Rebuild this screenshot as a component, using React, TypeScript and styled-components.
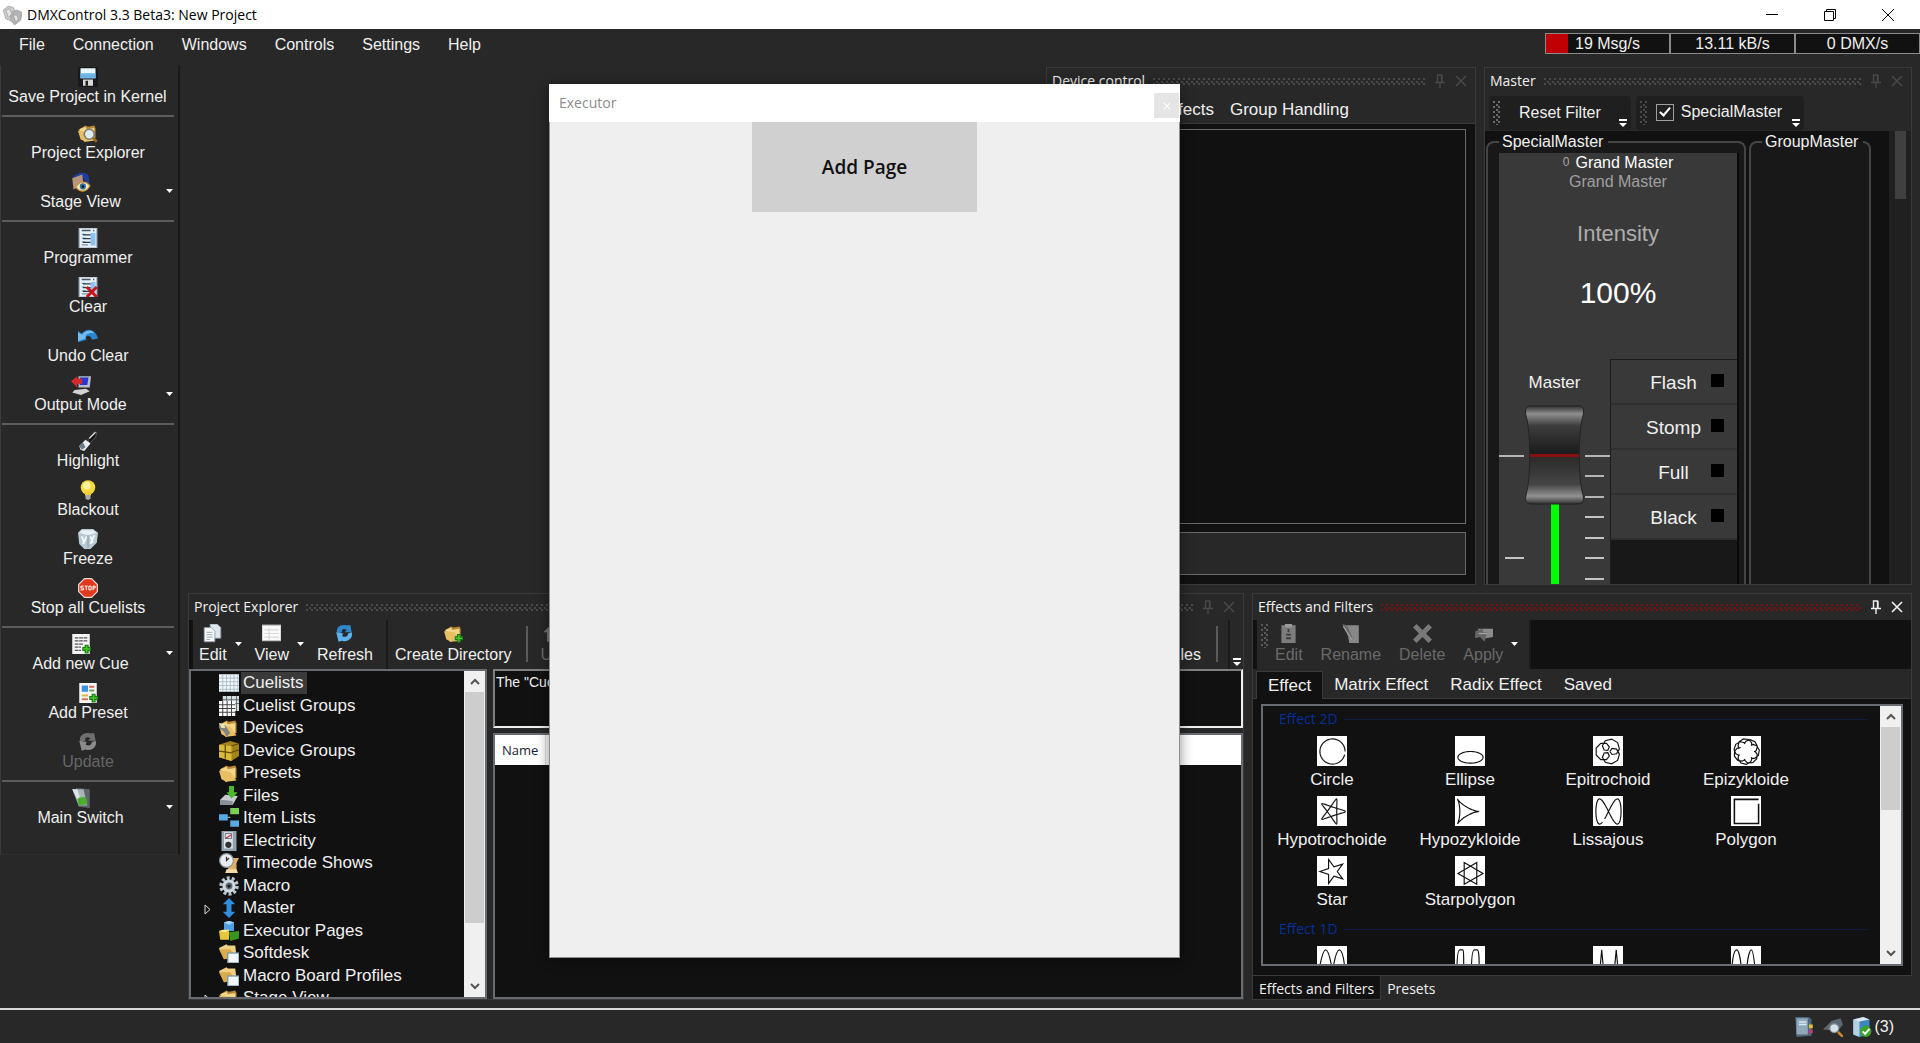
import React from 'react';
import styled, { createGlobalStyle, css } from 'styled-components';

const color = {
  frame: '#282828',
  pane: '#111111',
  inset: '#181818',
  fader: '#393939',
  edge: '#3a3a3a',
  box: '#686c72',
  text: '#f0f0f0',
  muted: '#6a6a6a',
};

const sans = '"Liberation Sans", Arial, sans-serif';
const ui = '"Open Sans", "Noto Sans", sans-serif';

const GlobalStyle = createGlobalStyle`
  *, *::before, *::after { box-sizing: border-box; }
  body { margin: 0; background: ${color.frame}; overflow: hidden; }
  button, input { font: inherit; color: inherit; margin: 0; }
  button { background: none; border: 0; padding: 0; cursor: default; white-space: nowrap; }
  ul { list-style: none; margin: 0; padding: 0; }
  svg { display: block; flex: none; }
`;

/* ---------- icons ---------- */

const folder = (
  <>
    <path d="M1 5l5-3 2 1 5-1 1 2v8l-9 3z" fill="#b98a35" />
    <path d="M1 5l5-2 1 2 6-1v8l-8 3z" fill="#f3d68a" />
    <path d="M0 6l9 1 5 7-8 1-4-2z" fill="#e8bf62" />
  </>
);
const form = (
  <>
    <rect x="1" y="0" width="14" height="16" fill="#e7f0f8" stroke="#aebdca" />
    <path d="M3 2h7M12 2h1" stroke="#4a5560" strokeWidth="1.2" />
    <rect x="10" y="4" width="4" height="10" fill="#8ec3ee" />
    <path d="M3 5h3M3 8h3M3 11h3M3 13.500h5" stroke="#7b93a8" strokeWidth="1" />
    <path d="M4 5.500h6M4 8.500h6M4 11.500h6" stroke="#2b3a48" strokeWidth="1" />
  </>
);
const plus = <path d="M9 12h7M12.500 8.500v7" stroke="#1c7a12" strokeWidth="3.200" />;
const plusCore = <path d="M9.800 12h5.400M12.500 9.300v5.400" stroke="#45c62c" strokeWidth="1.300" />;
const windowedFolder = (
  <>
    <path d="M0 4l6-3 1 1 6 0 1 9-10 2z" fill="#f0d083" />
    <path d="M0 5l9 0 4 5-9 3z" fill="#d9ab4b" />
    <rect x="7" y="8" width="9" height="8" fill="#f2f6fa" stroke="#7a93aa" />
  </>
);
const refreshShape = (a: string, b: string) => (
  <>
    <path d="M2 8C0 3 5 0 9 1l4 0 1 6-6 0 2-2C7 3 5 5 6 7z" fill={a} />
    <path d="M1 7l6 1-1 2c3 2 5 0 5-2l3-1c2 4-3 9-8 7l-3 1z" fill={b} />
  </>
);

const glyphs: Record<string, React.ReactNode> = {
  logo: (
    <g stroke="#999" strokeWidth="0.600">
      <path d="M1 4l4-3 4 1 2 5-3 6-5-2z" fill="#cfcfcf" />
      <path d="M7 6l5-2 4 2-1 6-5 4-3-4z" fill="#b4b4b4" />
      <path d="M3 4l3-1 2 4-3 3zM9 8l3 0 1 3-2 3z" fill="#e4e4e4" />
    </g>
  ),
  save: (
    <>
      <path d="M0 0h16v16H1L0 15z" fill="#17191c" />
      <rect x="2" y="1" width="12" height="8" fill="#eaf5fd" />
      <rect x="2" y="5" width="12" height="4" fill="#69b5ea" />
      <rect x="4" y="10" width="8" height="5" fill="#d9d9d9" />
      <rect x="6" y="11" width="2" height="4" fill="#222" />
    </>
  ),
  explorer: (
    <>
      {folder}
      <circle cx="9" cy="9" r="4" fill="#dfe9ef" stroke="#7c7c7c" strokeWidth="1.300" />
      <path d="M12 12l3 3" stroke="#9a6a1f" strokeWidth="2" />
    </>
  ),
  stage: (
    <>
      <path d="M1 5C4 0 12-1 14 3l1 9-5-7-8 1z" fill="#1d3fa5" />
      <path d="M1 5l8-3 1 8-8 4z" fill="#b9937c" />
      <path d="M4 12c3-5 8-5 11-1-3 6-8 5-11 1z" fill="#f6ecd2" stroke="#d59a35" />
      <circle cx="9.500" cy="11.500" r="2.500" fill="#2f73a5" />
      <circle cx="9.500" cy="11.500" r="1" fill="#111" />
    </>
  ),
  programmer: form,
  clear: (
    <>
      {form}
      <path d="M7 8l8 8M15 8l-8 8" stroke="#c8141b" strokeWidth="2.400" />
    </>
  ),
  undo: (
    <>
      <path d="M0 13V4l3 2c4-5 11-4 13 4l-5 1c0-3-3-4-5-2l1 2z" fill="#2d86cd" />
      <path d="M0 12V5l3 2c4-4 8-4 10-1-3-1-6 0-7 2l0 2z" fill="#74bcf0" />
    </>
  ),
  output: (
    <>
      <path d="M6 1h10l-1 9-9 0z" fill="#b9bcc4" />
      <path d="M7 2h7l-1 6-6 0z" fill="#2437d5" />
      <path d="M3 12l9-1 3 2-7 3-7-2z" fill="#d3d3d3" />
      <path d="M0 5l5-4v2h4v4H5v3z" fill="#d42a2a" />
    </>
  ),
  highlight: (
    <>
      <path d="M8 7l5-6 2 0-1 4-5 5z" fill="#151515" stroke="#777" strokeWidth="0.500" />
      <path d="M1 12l5-5 4 3-5 6-3-1z" fill="#e9eef2" />
      <path d="M1 12l3-3 2 4-3 2z" fill="#6d7a86" />
      <path d="M9 6l5-5" stroke="#ddd" />
    </>
  ),
  bulb: (
    <>
      <circle cx="8" cy="6" r="5.800" fill="#f5d93d" />
      <path d="M5 9h6l-1 4H6z" fill="#f0cf38" />
      <circle cx="7" cy="4.500" r="3" fill="#fdf4a0" />
      <path d="M6 12h4v3l-2 1-2-1z" fill="#a5a9ad" />
    </>
  ),
  freeze: (
    <>
      <path d="M0 3l3-3h9l4 3-1 8-5 5H5l-4-4z" fill="#b9cad5" />
      <path d="M3 1h9l3 2-7 2-7-2z" fill="#e9f1f6" />
      <path d="M3 6l2 5M7 6l-3 6M10 6l2 5M13 5l-3 7" stroke="#f8fcff" strokeWidth="1.400" />
      <path d="M8 5l0 10" stroke="#8ba0af" />
    </>
  ),
  stop: (
    <>
      <path d="M5 0h6l5 5v6l-5 5H5l-5-5V5z" fill="#f3d8d2" />
      <path d="M5.300 1h5.400L15 5.300v5.400L10.700 15H5.300L1 10.700V5.300z" fill="#e03a1e" />
      <path
        d="M4.500 6.500H2.300V8h2v1.500H2M5.500 6.500h2.200M6.600 6.500v3.200M8.700 6.500h1.800v3H8.700zM12 9.800V6.500h1.700V8H12"
        stroke="#fff"
        strokeWidth="0.800"
        fill="none"
      />
    </>
  ),
  addCue: (
    <>
      <rect x="1" y="0" width="14" height="16" fill="#f4f6f4" />
      <path d="M3 3h10M3 5.500h10M3 8h7M3 10.500h5M3 13h5" stroke="#555" strokeDasharray="3 0.500" />
      {plus}
      {plusCore}
    </>
  ),
  addPreset: (
    <>
      <rect x="1" y="0" width="14" height="16" fill="#f6f6f6" />
      <rect x="3" y="2" width="5" height="5" fill="#3a93df" />
      <path d="M9 3h4" stroke="#dd5b4d" strokeWidth="1.500" />
      <path d="M9 6h4" stroke="#59a559" strokeWidth="1.500" />
      <path d="M3 10h5" stroke="#d9b13a" strokeWidth="1.500" />
      <path d="M3 13h5" stroke="#cc6c56" strokeWidth="1.500" />
      {plus}
      {plusCore}
    </>
  ),
  update: refreshShape('#6f6f6f', '#8b8b8b'),
  refresh: refreshShape('#2f87cc', '#5db1ec'),
  switch: (
    <>
      <path d="M4 0l11 1v15l-9-1z" fill="#5d6368" />
      <path d="M1 1l9 0 3 13-7 0z" fill="#a9b4bb" />
      <path d="M5 8l7-1 1 6-7 1z" fill="#4cae2e" />
      <path d="M1 1l4 0 2 6-2 2z" fill="#dce4e8" />
    </>
  ),
  pages: (
    <>
      <path d="M6 0h6l3 3v9H6z" fill="#dfe7ee" stroke="#8494a2" strokeWidth="0.700" />
      <path d="M1 3h6l3 3v9H1z" fill="#f7f9fb" stroke="#8494a2" strokeWidth="0.700" />
      <path d="M3 7h5M3 9h5M3 11h5M3 13h3" stroke="#9aa6b0" strokeWidth="0.800" />
    </>
  ),
  view: (
    <>
      <rect x="0" y="1" width="16" height="13" fill="#fafafa" stroke="#c0c4c8" />
      <path d="M2 5h12M2 8h12M2 11h12M6 3v10" stroke="#d3d9de" />
    </>
  ),
  createDir: (
    <>
      {folder}
      {plus}
      {plusCore}
    </>
  ),
  up: <path d="M8 1l6 6h-3v8H5V7H2z" fill="#777" />,
  grid: (
    <>
      <rect x="0" y="1" width="16" height="14" fill="#f2f7fa" />
      <path d="M0 4h16M0 7h16M0 10h16M0 13h16M3 1v14M6 1v14M9 1v14M12 1v14M15 1v14" stroke="#aec0cb" strokeWidth="0.800" />
    </>
  ),
  grids: (
    <>
      <rect x="3" y="0" width="13" height="12" fill="#d8dde0" />
      <path d="M3 3h13M3 6h13M14 0v12M10 0v12M6 0v12" stroke="#566" strokeWidth="0.700" />
      <rect x="0" y="4" width="13" height="12" fill="#fff" />
      <path d="M0 7h13M0 10h13M0 13h13M3 4v12M6.500 4v12M10 4v12" stroke="#444" strokeWidth="0.800" />
    </>
  ),
  devices: (
    <>
      {folder}
      <path d="M0 4l5 2 4 6-3 3-2-4-4-3z" fill="#7f8386" />
      <path d="M0 4l4 1 1 3-3 0z" fill="#ede6a8" />
    </>
  ),
  deviceGroup: (
    <>
      <path d="M0 3l9-3 7 2v10l-6 4-10-3z" fill="#a4831a" />
      <path d="M0 3l10 1v12L0 13z" fill="#d9bb3b" />
      <path d="M5 3v11M0 8l10 1.500M10 4l6-2M10 9l6-2" stroke="#5f4b0b" strokeWidth="1" />
    </>
  ),
  folder,
  files: (
    <>
      <path d="M1 11l4-4 10 1-4 7-10 0z" fill="#c6ccd1" />
      <path d="M1 11l10 1v3l-10 0z" fill="#87919a" />
      <path d="M8 0h4v5h3l-5 5-4-5h2z" fill="#4cb82c" />
    </>
  ),
  items: (
    <>
      <rect x="9" y="0" width="7" height="5" fill="#7bd053" />
      <rect x="0" y="5" width="7" height="5" fill="#58aae4" />
      <rect x="9" y="10" width="7" height="5" fill="#58aae4" />
      <path d="M7 7.500h2" stroke="#9fb3bd" fill="none" />
    </>
  ),
  meter: (
    <>
      <path d="M2 0h12v16H2z" fill="#93a2ae" />
      <rect x="4" y="1" width="7" height="13" fill="#dfe5e9" />
      <path d="M5 6l5-3" stroke="#c33" />
      <circle cx="7.500" cy="11" r="2.500" fill="#333" />
      <path d="M5 2h5v4H5z" fill="none" stroke="#667" strokeWidth="0.700" />
    </>
  ),
  timecode: (
    <>
      <path d="M8 4h8l-2 4v5l1 3H7z" fill="#dcae62" />
      <circle cx="6" cy="6" r="5.500" fill="#eceff1" stroke="#8e979d" />
      <path d="M6 3v3l2-2" stroke="#333" fill="none" />
      <path d="M6 13l8 0 1 3H5z" fill="#f4dba6" />
    </>
  ),
  gear: (
    <>
      <circle cx="8" cy="8" r="6.300" fill="none" stroke="#b9c5cf" strokeWidth="3" strokeDasharray="2.300 1.660" />
      <circle cx="8" cy="8" r="4" fill="#5e6973" stroke="#ced8e0" strokeWidth="2.500" />
      <circle cx="8" cy="8" r="1.300" fill="#1a1a1a" />
    </>
  ),
  master: <path d="M8 0l5 5h-3v6h3l-5 5-5-5h3V5H3z" fill="#2f8ddd" />,
  blocks: (
    <>
      <path d="M4 1l4-1 4 1v7H4z" fill="#4f9fe6" />
      <path d="M4 1l4-1 4 1-4 2z" fill="#a8d3f7" />
      <path d="M0 8l8-1v8H1z" fill="#e6c737" />
      <path d="M0 8l3-1 5 0-3 2z" fill="#f8ec9c" />
      <path d="M8 9l8-1v6l-7 2z" fill="#38961f" />
    </>
  ),
  windowed: windowedFolder,
  editOff: (
    <>
      <rect x="2" y="1" width="12" height="15" fill="#7c7c7c" />
      <rect x="5" y="0" width="6" height="3" fill="#999" />
      <path d="M8 4v3M6 9h4M6 12h4" stroke="#3c3c3c" strokeWidth="1.500" />
    </>
  ),
  renameOff: (
    <>
      <path d="M4 1h11v15H7z" fill="#888" />
      <path d="M1 0l4 1 5 11-3 0z" fill="#686868" />
      <path d="M2 2l7 11" stroke="#a5a5a5" />
    </>
  ),
  deleteOff: <path d="M3 0l5 5 5-5 3 3-5 5 5 5-3 3-5-5-5 5-3-3 5-5-5-5z" fill="#787878" />,
  applyOff: (
    <>
      <path d="M3 4h13v7l-6 1z" fill="#8b8b8b" />
      <path d="M1 6l6-2 1 3 3 0-2 8-4-4-4 1z" fill="#666" />
      <path d="M4 8h7" stroke="#a8a8a8" />
    </>
  ),
  server: (
    <>
      <path d="M1 0h11l2 2v13l-12 1z" fill="#4d687d" />
      <path d="M2 1h9v13H2z" fill="#8fa9bb" />
      <path d="M4 4h6M4 6h6" stroke="#dce8f0" strokeWidth="1.300" />
      <rect x="12" y="6" width="3" height="3" fill="#e3c22f" />
      <rect x="12" y="10" width="3" height="3" fill="#c13c82" />
    </>
  ),
  inspect: (
    <>
      <path d="M0 10l7-7 7-2 2 5-4 5z" fill="#5b6772" />
      <circle cx="9" cy="9" r="3.500" fill="#d5e2ea" stroke="#8a949b" />
      <path d="M12 12l4 4" stroke="#c98a2d" strokeWidth="2" />
    </>
  ),
  database: (
    <>
      <path d="M1 2l8-2 5 2v12l-8 2-5-2z" fill="#3e86c2" />
      <path d="M1 2l5 1v13l-5-2z" fill="#b4cfe0" />
      <path d="M1 2l8-2 5 2-8 1.500z" fill="#dfeaf1" />
      <circle cx="11" cy="11.500" r="4.500" fill="#3aa328" />
      <path d="M8.500 11.500l2 2 3.500-4" stroke="#fff" strokeWidth="1.500" fill="none" />
    </>
  ),
};

const Glyph = ({ name, size = 20 }: { name: string; size?: number }) => (
  <svg width={size} height={size} viewBox="0 0 16 16" aria-hidden="true">
    {glyphs[name]}
  </svg>
);

const Pin = () => (
  <svg width="10" height="14" viewBox="0 0 10 14" aria-hidden="true">
    <path d="M2.500 8V1h4v7M7 1v7M0 8.500h10M5 9v5" fill="none" stroke="currentColor" strokeWidth="1.400" />
  </svg>
);

const Cross = ({ size = 12 }: { size?: number }) => (
  <svg width={size} height={size} viewBox="0 0 12 12" aria-hidden="true">
    <path d="M1 1l10 10M11 1L1 11" stroke="currentColor" strokeWidth="1.600" />
  </svg>
);

const Caret = () => (
  <svg width="8" height="4" viewBox="0 0 8 4" aria-hidden="true">
    <path d="M0 0h7L3.500 4z" fill="#fff" />
  </svg>
);

const Overflow = () => (
  <svg width="8" height="8" viewBox="0 0 8 8" aria-hidden="true">
    <path d="M0 0h8v2H0zM0 4h8L4 8z" fill="#fff" />
  </svg>
);

const Chevron = ({ down }: { down?: boolean }) => (
  <svg width="10" height="7" viewBox="0 0 10 7" aria-hidden="true">
    <path d={down ? 'M1 1l4 4 4-4' : 'M1 6l4-4 4 4'} fill="none" stroke="#555" strokeWidth="2" />
  </svg>
);

/* ---------- curve thumbnails ---------- */

type Fn = (t: number) => [number, number];

const plot = (fn: Fn, end: number, steps: number) =>
  Array.from({ length: steps + 1 }, (_, i) => {
    const [x, y] = fn((end * i) / steps);
    return `${i ? 'L' : 'M'}${x.toFixed(2)} ${y.toFixed(2)}`;
  }).join('');

const { cos, sin, PI } = Math;
const polar = (r: number, a: number, cx = 16, cy = 16) =>
  `${(cx + r * cos(a)).toFixed(2)} ${(cy + r * sin(a)).toFixed(2)}`;

const curves: Record<string, string> = {
  Circle: plot((t) => [16 + 13 * cos(t), 16 - 13 * sin(t)], 2 * PI * 0.96, 60),
  Ellipse: plot((t) => [16 + 13 * cos(t), 22 + 6 * sin(t)], 2 * PI, 60),
  Epitrochoid: plot(
    (t) => [16 + 7.4 * cos(t) - 6 * cos(4 * t), 16 + 7.4 * sin(t) - 6 * sin(4 * t)],
    2 * PI,
    27,
  ),
  Epizykloide: plot(
    (t) => [16 + 10.6 * cos(t) - 2.8 * cos(4.5 * t), 16 + 10.6 * sin(t) - 2.8 * sin(4.5 * t)],
    4 * PI * 0.99,
    50,
  ),
  Hypotrochoide: plot(
    (t) => [16 + 4.6 * cos(t) + 9 * cos((2 * t) / 3), 16 + 4.6 * sin(t) - 9 * sin((2 * t) / 3)],
    6 * PI * 0.99,
    90,
  ),
  Hypozykloide: plot((t) => [10 + 10 * cos(t) + 5 * cos(2 * t), 16 + 10 * sin(t) - 5 * sin(2 * t)], 2 * PI, 60),
  Lissajous: plot((t) => [16 + 13 * cos(t + 4.4), 16 + 13 * sin(2 * (t + 4.4))], 2 * PI * 0.97, 70),
  Polygon: 'M28.500 8V28.500H3.500V3.500H28.500',
  Star:
    Array.from({ length: 10 }, (_, i) => `${i ? 'L' : 'M'}${polar(i % 2 ? 5 : 13, PI + (i * PI) / 5)}`).join('') + 'Z',
  Starpolygon: [0, PI]
    .map((o) => [0, 1, 2].map((i) => `${i ? 'L' : 'M'}${polar(13, o + (i * 2 * PI) / 3, 16, 18)}`).join('') + 'Z')
    .join(''),
  'Wave A': 'M2 26C4 14 6 4 9 4s5 10 7 22C18 14 20 4 23 4s5 10 6 22',
  'Wave B': 'M2 26C2 14 3 4 5 4h3c1 0 1 6 1 22M17 26c0-12 1-22 3-22h3c2 0 2 10 2 22',
  'Wave C': 'M7 26L9 4l2 22M22 26l2-22 2 22',
  'Wave D': 'M1 22C2 8 4 4 6 4s4 10 5 22M16 26c1-12 3-22 5-22s3 10 4 22',
};

const Thumb = ({ name }: { name: string }) => (
  <svg width="30" height="30" viewBox="0 0 31 31" aria-hidden="true">
    <rect width="31" height="31" fill="#fff" />
    <path d={curves[name]} fill="none" stroke="#111" strokeWidth={name === 'Polygon' ? 1.6 : 1.2} />
  </svg>
);

/* ---------- shell ---------- */

const Shell = styled.div`
  position: relative;
  display: flex;
  flex-direction: column;
  height: 100vh;
  background: ${color.frame};
  color: ${color.text};
  font: 16px/20px ${sans};
`;

const TitleBar = styled.header`
  display: flex;
  align-items: center;
  height: 29px;
  padding: 0 26px 0 2px;
  gap: 5px;
  background: #fff;
  color: #000;
  font: 14px/20px ${ui};
`;

const AppTitle = styled.h1`
  flex: 1;
  margin: 0;
  font: inherit;
`;

const WindowButtons = styled.div`
  display: flex;
  align-items: center;
  gap: 46px;
`;

const MenuBar = styled.nav`
  display: flex;
  height: 36px;
  padding-left: 5px;
`;

const MenuButton = styled.button`
  padding: 0 14px;
  height: 32px;
`;

const Meters = styled.div`
  display: flex;
  margin: 4px 0 0 auto;
`;

const Meter = styled.div<{ $load?: number }>`
  width: 125px;
  height: 21px;
  border: 1px solid #8a8a8a;
  line-height: 19px;
  text-align: center;
  background: linear-gradient(#c00000, #c00000) 0 0 / ${(p) => p.$load ?? 0}px 100% no-repeat ${color.pane};
`;

const Body = styled.div`
  flex: 1;
  min-height: 0;
  display: flex;
  gap: 8px;
  padding: 0 8px 8px 0;
`;

/* ---------- left tool bar ---------- */

const SideBar = styled.aside`
  align-self: flex-start;
  width: 180px;
  padding: 0 4px 19px 0;
  border-right: 2px solid #191919;
  border-left: 1px solid #3a3a3a;
  border-bottom: 1px solid #2f2f2f;
`;

const SideGroup = styled.div`
  & + & {
    border-top: 2px solid #5c5c5c;
    margin: 1px 0 0 1px;
    padding-top: 4px;
  }
`;

const SideButton = styled.button`
  display: flex;
  align-items: center;
  width: 100%;
  height: 49px;
  padding-bottom: 7px;
  &:disabled { color: #666; }
`;

const SideCaret = styled.span`
  display: flex;
  padding-left: 7px;
`;

const Stack = styled.span`
  flex: 1;
  display: flex;
  flex-direction: column;
  align-items: center;
  line-height: 20px;
  padding-top: 2px;
`;

const sideGroups: { label: string; icon: string; menu?: boolean; off?: boolean }[][] = [
  [{ label: 'Save Project in Kernel', icon: 'save' }],
  [
    { label: 'Project Explorer', icon: 'explorer' },
    { label: 'Stage View', icon: 'stage', menu: true },
  ],
  [
    { label: 'Programmer', icon: 'programmer' },
    { label: 'Clear', icon: 'clear' },
    { label: 'Undo Clear', icon: 'undo' },
    { label: 'Output Mode', icon: 'output', menu: true },
  ],
  [
    { label: 'Highlight', icon: 'highlight' },
    { label: 'Blackout', icon: 'bulb' },
    { label: 'Freeze', icon: 'freeze' },
    { label: 'Stop all Cuelists', icon: 'stop' },
  ],
  [
    { label: 'Add new Cue', icon: 'addCue', menu: true },
    { label: 'Add Preset', icon: 'addPreset' },
    { label: 'Update', icon: 'update', off: true },
  ],
  [{ label: 'Main Switch', icon: 'switch', menu: true }],
];

/* ---------- docked panels ---------- */

const Workspace = styled.main`
  flex: 1;
  min-width: 0;
  display: grid;
  grid-template-rows: 518fr 407fr;
  gap: 8px;
  padding-top: 2px;
`;

const DockRow = styled.div`
  display: flex;
  justify-content: flex-end;
  gap: 8px;
  min-height: 0;
`;

const Panel = styled.section<{ $width?: number }>`
  ${(p) => (p.$width ? css`width: ${p.$width}px;` : css`flex: 1;`)}
  min-width: 0;
  min-height: 0;
  display: flex;
  flex-direction: column;
  border: 1px solid ${color.edge};
  background: ${color.frame};
`;

const PanelHead = styled.header<{ $active?: boolean }>`
  display: flex;
  align-items: center;
  flex: none;
  height: 26px;
  padding: 0 8px 0 5px;
  gap: 8px;
  color: ${(p) => (p.$active ? '#f0f0f0' : '#484848')};
`;

const PanelTitle = styled.h2`
  margin: 0;
  color: ${color.text};
  font: 14px/20px ${ui};
`;

const Dots = styled.span<{ $tone: string; $vertical?: boolean }>`
  ${(p) => (p.$vertical ? css`width: 8px; height: 24px; flex: none;` : css`flex: 1; height: 7px;`)}
  background: radial-gradient(circle at 1px 1px, ${(p) => p.$tone} 0 1px, transparent 1px) 0 0 / 5px 5px,
    radial-gradient(circle at 1px 1px, ${(p) => p.$tone} 0 1px, transparent 1px) 3px 3px / 5px 5px;
`;

const HeadButtons = styled.span`
  display: flex;
  align-items: center;
  gap: 10px;
  padding-left: 2px;
`;

const Head = ({ title, active }: { title: string; active?: boolean }) => (
  <PanelHead $active={active}>
    <PanelTitle>{title}</PanelTitle>
    <Dots $tone={active ? '#7d1010' : '#4a4a4a'} />
    <HeadButtons>
      <button aria-label={`Pin ${title}`}><Pin /></button>
      <button aria-label={`Close ${title}`}><Cross /></button>
    </HeadButtons>
  </PanelHead>
);

/* ---------- device control ---------- */

const DeviceTabs = styled.div`
  display: flex;
  justify-content: flex-end;
  align-items: flex-start;
  gap: 16px;
  height: 30px;
  padding: 6px 126px 0 0;
  font-size: 17px;
  border-bottom: 1px solid ${color.edge};
`;

const DeviceBody = styled.div`
  flex: 1;
  display: flex;
  flex-direction: column;
  gap: 8px;
  padding: 5px 9px 9px;
  background: ${color.pane};
`;

const DeviceBox = styled.div<{ $bar?: boolean }>`
  border: 1px solid #6a6a6a;
  ${(p) => (p.$bar ? css`height: 43px; background: ${color.frame};` : css`flex: 1;`)}
`;

/* ---------- master ---------- */

const MasterTools = styled.div`
  display: flex;
  flex: none;
  gap: 5px;
  height: 37px;
  padding: 2px 4px 1px;
`;

const ToolPiece = styled.div`
  display: flex;
  align-items: center;
  padding: 0 4px;
  border-radius: 4px;
  background: #1f1f1f;
`;

const ResetButton = styled.button`
  padding: 0 18px;
`;

const CheckLabel = styled.label`
  display: flex;
  align-items: center;
  gap: 7px;
  padding: 0 10px 2px 8px;
`;

const CheckBox = styled.input`
  appearance: none;
  width: 18px;
  height: 17px;
  border: 1px solid #a0a0a0;
  background: #202020;
  &:checked::after {
    content: '';
    display: block;
    width: 6px;
    height: 11px;
    margin: 0 0 0 5px;
    border: solid #fff;
    border-width: 0 2px 2px 0;
    transform: rotate(40deg);
  }
`;

const OverflowButton = styled.button`
  align-self: flex-end;
  padding: 0 0 3px;
`;

const MasterBody = styled.div`
  flex: 1;
  min-height: 0;
  display: flex;
  gap: 3px;
  padding-left: 1px;
  background: ${color.pane};
  overflow: hidden;
`;

const GroupBox = styled.fieldset<{ $width: number }>`
  width: ${(p) => p.$width}px;
  min-width: 0;
  margin: 0;
  padding: 0 5px 0 11px;
  border: 2px solid #454545;
  border-bottom: 0;
  border-radius: 8px 8px 0 0;
  background: ${color.inset};
  display: flex;
  flex-direction: column;
`;

const Legend = styled.legend`
  padding: 0 5px 0 3px;
  height: 22px;
  line-height: 22px;
`;

const Fader = styled.div`
  flex: 1;
  display: flex;
  flex-direction: column;
  min-height: 0;
  background: ${color.fader};
  border-right: 2px solid #0a0a0a;
`;

const FaderText = styled.div`
  display: flex;
  flex-direction: column;
  align-items: center;
  height: 206px;
`;

const FaderName = styled.div<{ $dim?: boolean }>`
  display: flex;
  gap: 6px;
  line-height: 19px;
  color: ${(p) => (p.$dim ? '#a0a0a0' : '#fff')};
  small { font-size: 12px; color: #a8a8a8; }
`;

const Attribute = styled.div`
  margin-top: 28px;
  font-size: 22px;
  line-height: 30px;
  color: #adadad;
`;

const Level = styled.output`
  margin-top: 26px;
  font-size: 30px;
  line-height: 36px;
  color: #fff;
`;

const FaderControls = styled.div`
  flex: 1;
  min-height: 0;
  display: grid;
  grid-template-columns: 111px 1fr;
  background: ${color.inset};
`;

const FaderColumn = styled.div`
  position: relative;
  display: flex;
  flex-direction: column;
  align-items: center;
  padding-top: 12px;
  min-height: 0;
  overflow: hidden;
  background: ${color.fader};
  label { font-size: 17px; line-height: 24px; margin-bottom: 10px; }
`;

const Range = styled.input`
  position: absolute;
  inset: 44px 24px 0;
  width: 63px;
  opacity: 0;
  writing-mode: vertical-lr;
`;

const FlashList = styled.div`
  display: flex;
  flex-direction: column;
  border-left: 1px solid #1c1c1c;
  border-top: 1px solid #1c1c1c;
`;

const FlashButton = styled.button`
  display: grid;
  grid-template-columns: 1fr auto 1fr;
  align-items: center;
  height: 45px;
  padding: 2px 13px 0 12px;
  font-size: 19px;
  background: ${color.fader};
  border-bottom: 2px solid #303030;
  &::before { content: ''; }
`;

const Lamp = styled.span`
  justify-self: end;
  width: 13px;
  height: 13px;
  margin-bottom: 5px;
  background: #000;
`;

const SlimScroll = styled.div`
  width: 22px;
  margin-left: auto;
  padding-left: 6px;
  background: #202020;
  &::before {
    content: '';
    display: block;
    width: 11px;
    height: 68px;
    background: #404040;
  }
`;

const FaderDrawing = () => (
  <svg width="111" height="300" viewBox="0 0 111 300" aria-hidden="true">
    <defs>
      <linearGradient id="cap" x1="0" y1="0" x2="0" y2="1">
        <stop offset="0" stopColor="#303030" />
        <stop offset="0.080" stopColor="#8f8f8f" />
        <stop offset="0.200" stopColor="#3d3d3d" />
        <stop offset="0.480" stopColor="#1c1c1c" />
        <stop offset="0.520" stopColor="#2a2a2a" />
        <stop offset="0.800" stopColor="#454545" />
        <stop offset="0.920" stopColor="#929292" />
        <stop offset="1" stopColor="#303030" />
      </linearGradient>
    </defs>
    <path d="M0 51h25M86 51h25M86 71h19M86 92h19" stroke="#b5b5b5" strokeWidth="2" />
    <path
      d="M86 112h19M86 133h19M6 153h19M86 153h19M86 174h19M86 194h19M86 215h19M86 236h19M86 256h19"
      stroke="#f2f2f2"
      strokeWidth="1.500"
    />
    <rect x="52" y="98" width="8" height="202" fill="#00ff00" />
    <path
      d="M30 1h51q5 1 3 10c-5 16-5 62 0 79q2 8-4 9H31q-6-1-4-9c5-17 5-63 0-79q-2-9 3-10z"
      fill="url(#cap)"
      stroke="#232323"
    />
    <path d="M31 50.500h49" stroke="#8a0f0f" strokeWidth="3" />
  </svg>
);

/* ---------- horizontal tool bars ---------- */

const ToolBar = styled.div`
  display: flex;
  flex: none;
  height: 49px;
  padding-left: 4px;
  background: ${color.pane};
`;

const ToolStrip = styled.div<{ $kind?: 'grow' | 'wide' | 'end' }>`
  display: flex;
  gap: 4px;
  padding: 4px 13px 0 6px;
  background: ${color.frame};
  border-right: 2px solid #1a1a1a;
  ${(p) => p.$kind === 'grow' && css`flex: 1; min-width: 0; padding: 4px 2px 0 7px;`}
  ${(p) => p.$kind === 'wide' && css`gap: 18px; padding: 4px 2px 0 4px;`}
  ${(p) => p.$kind === 'end' && css`padding: 0 2px 0 3px; border: 0;`}
`;

const GripTool = styled.span`
  display: flex;
  align-items: flex-start;
  gap: 6px;
`;

const ToolButton = styled.button`
  display: flex;
  align-items: flex-start;
  gap: 8px;
  &:disabled { color: ${color.muted}; }
`;

const ToolFace = styled.span`
  display: flex;
  flex-direction: column;
  align-items: center;
  gap: 2px;
`;

const ToolCaret = styled.span`
  display: flex;
  padding: 18px 8px 0 0;
`;

const Divider = styled.span`
  width: 2px;
  height: 36px;
  margin: 2px 8px 0 11px;
  background: #5a5a5a;
`;

const Spring = styled.span`
  flex: 1;
`;

const Tool = ({ label, icon, menu, off }: { label: string; icon: string; menu?: boolean; off?: boolean }) => (
  <ToolButton disabled={off}>
    <ToolFace>
      <Glyph name={icon} size={19} />
      {label}
    </ToolFace>
    {menu && <ToolCaret><Caret /></ToolCaret>}
  </ToolButton>
);

/* ---------- scroll bars ---------- */

const ScrollTrack = styled.div`
  flex: none;
  display: flex;
  flex-direction: column;
  align-items: center;
  justify-content: space-between;
  width: 21px;
  padding: 0 1px;
  background: #f0f0f0;
`;

const ScrollButton = styled.button`
  display: grid;
  place-items: center;
  width: 19px;
  height: 21px;
`;

const ScrollThumb = styled.div<{ $share: number }>`
  width: 100%;
  height: ${(p) => p.$share}%;
  margin-bottom: auto;
  background: #cdcdcd;
`;

const ScrollBar = ({ share }: { share: number }) => (
  <ScrollTrack>
    <ScrollButton aria-label="Scroll up"><Chevron /></ScrollButton>
    <ScrollThumb $share={share} />
    <ScrollButton aria-label="Scroll down"><Chevron down /></ScrollButton>
  </ScrollTrack>
);

/* ---------- project explorer ---------- */

const ExplorerBody = styled.div`
  flex: 1;
  min-height: 0;
  display: grid;
  grid-template-columns: 298px 1fr;
  gap: 6px;
`;

const TreeBox = styled.div`
  display: flex;
  min-height: 0;
  border: 2px solid ${color.box};
  background: ${color.pane};
`;

const Tree = styled.ul`
  flex: 1;
  min-width: 0;
  overflow: hidden;
  padding: 1px 0 0 13px;
  font-size: 17px;
`;

const TreeItem = styled.li`
  display: flex;
  align-items: center;
  height: 22px;
  &:nth-child(even) { height: 23px; }
`;

const Twist = styled.span`
  width: 15px;
  padding-top: 3px;
`;

const TreeLabel = styled.span<{ $selected?: boolean }>`
  margin-left: 2px;
  padding: 0 4px 0 2px;
  line-height: 22px;
  background: ${(p) => (p.$selected ? '#3a3a3a' : 'transparent')};
`;

const tree = [
  ['Cuelists', 'grid'],
  ['Cuelist Groups', 'grids'],
  ['Devices', 'devices'],
  ['Device Groups', 'deviceGroup'],
  ['Presets', 'folder'],
  ['Files', 'files'],
  ['Item Lists', 'items'],
  ['Electricity', 'meter'],
  ['Timecode Shows', 'timecode'],
  ['Macro', 'gear'],
  ['Master', 'master'],
  ['Executor Pages', 'blocks'],
  ['Softdesk', 'windowed'],
  ['Macro Board Profiles', 'windowed'],
  ['Stage View', 'folder'],
];

const Details = styled.div`
  display: flex;
  flex-direction: column;
  gap: 5px;
  min-width: 0;
`;

const Note = styled.p`
  height: 59px;
  margin: 0;
  padding: 1px;
  border: 2px solid;
  border-color: #808080 #f0f0f0 #f0f0f0 #808080;
  background: ${color.pane};
  font-size: 14px;
`;

const ListBox = styled.div`
  flex: 1;
  border: 2px solid ${color.box};
  background: ${color.pane};
`;

const ListTable = styled.table`
  width: 100%;
  border-collapse: collapse;
  background: #fff;
  color: #1b1b33;
  font: 13px/30px ${ui};
  th { padding: 0 7px; font-weight: 400; text-align: left; }
  th:first-child { width: 50px; border-right: 1px solid #ddd; }
`;

/* ---------- effects and filters ---------- */

const EffectsDock = styled.div`
  width: 660px;
  display: flex;
  flex-direction: column;
  min-height: 0;
`;

const TabRow = styled.div`
  display: flex;
  flex: none;
  height: 30px;
  padding: 2px 0 0 3px;
  font-size: 17px;
  border-bottom: 1px solid ${color.edge};
`;

const Tab = styled.button<{ $active?: boolean }>`
  padding: 0 11px;
  height: 28px;
  ${(p) => p.$active && css`
    background: ${color.pane};
    border: 1px solid ${color.edge};
    border-bottom: 0;
  `}
`;

const EffectsBody = styled.div`
  flex: 1;
  min-height: 0;
  display: flex;
  padding: 5px 8px 9px;
  background: ${color.pane};
`;

const EffectsBox = styled.div`
  flex: 1;
  display: flex;
  min-height: 0;
  border: 2px solid ${color.box};
`;

const EffectsList = styled.div`
  flex: 1;
  min-width: 0;
  overflow: hidden;
`;

const EffectsHeading = styled.h3`
  display: flex;
  align-items: center;
  gap: 6px;
  height: 30px;
  margin: 0;
  padding: 0 12px 4px 16px;
  color: #03309a;
  font: 14px/20px ${ui};
  &::after {
    content: '';
    flex: 1;
    height: 1px;
    background: #0d1c40;
  }
`;

const EffectsGrid = styled.div`
  display: grid;
  grid-template-columns: repeat(4, 138px);
  grid-auto-rows: 60px;
  font-size: 17px;
`;

const EffectButton = styled.button`
  display: flex;
  flex-direction: column;
  align-items: center;
  gap: 4px;
`;

const BottomTabs = styled.div`
  display: flex;
  flex: none;
  height: 24px;
  font: 14px/20px ${ui};
`;

const BottomTab = styled.button<{ $active?: boolean }>`
  padding: 2px 6px 0;
  ${(p) => p.$active && css`
    background: ${color.pane};
    border: 1px solid ${color.edge};
    border-top: 0;
  `}
`;

const effects2d = [
  'Circle', 'Ellipse', 'Epitrochoid', 'Epizykloide', 'Hypotrochoide',
  'Hypozykloide', 'Lissajous', 'Polygon', 'Star', 'Starpolygon',
];
const effects1d = ['Wave A', 'Wave B', 'Wave C', 'Wave D'];

/* ---------- status bar ---------- */

const StatusBar = styled.footer`
  display: flex;
  align-items: center;
  justify-content: flex-end;
  flex: none;
  height: 35px;
  padding: 0 26px 0 0;
  gap: 9px;
  border-top: 2px solid #d8d8d8;
  span { margin-left: -7px; }
`;

/* ---------- floating executor window ---------- */

const FloatingWindow = styled.section`
  position: absolute;
  left: 549px;
  top: 84px;
  width: 631px;
  height: 874px;
  display: flex;
  flex-direction: column;
  background: #efefef;
  box-shadow: 0 2px 12px rgba(0, 0, 0, 0.45);
`;

const FloatingHead = styled.header`
  display: flex;
  align-items: center;
  justify-content: space-between;
  height: 38px;
  padding: 0 1px 0 10px;
  background: #fff;
  color: #8c8c8c;
  h2 { margin: 0; font: 14px/20px ${ui}; }
`;

const FloatingClose = styled.button`
  display: grid;
  place-items: center;
  align-self: flex-end;
  width: 25px;
  height: 25px;
  margin-bottom: 4px;
  background: #e5e5e5;
  color: #fff;
`;

const FloatingBody = styled.div`
  flex: 1;
  display: flex;
  justify-content: center;
  align-items: flex-start;
  border: 1px solid #8f8f8f;
  border-top: 0;
`;

const AddPage = styled.button`
  width: 225px;
  height: 90px;
  background: #d0d0d0;
  color: #111;
  font: 600 19px/24px ${ui};
`;

export default function App() {
  return (
    <Shell>
      <GlobalStyle />
      <TitleBar>
        <Glyph name="logo" />
        <AppTitle>DMXControl 3.3 Beta3: New Project</AppTitle>
        <WindowButtons>
          <button aria-label="Minimize">
            <svg width="12" height="12" viewBox="0 0 12 12"><path d="M0 5.500h12" stroke="#000" /></svg>
          </button>
          <button aria-label="Restore">
            <svg width="12" height="12" viewBox="0 0 12 12">
              <path d="M.5 2.500h9v9h-9zM2.500 2.500v-2h9v9h-2" fill="none" stroke="#000" />
            </svg>
          </button>
          <button aria-label="Close">
            <svg width="12" height="12" viewBox="0 0 12 12"><path d="M0 0l12 12M12 0L0 12" stroke="#000" /></svg>
          </button>
        </WindowButtons>
      </TitleBar>

      <MenuBar>
        {['File', 'Connection', 'Windows', 'Controls', 'Settings', 'Help'].map((m) => (
          <MenuButton key={m}>{m}</MenuButton>
        ))}
        <Meters>
          <Meter $load={22}>19 Msg/s</Meter>
          <Meter>13.11 kB/s</Meter>
          <Meter>0 DMX/s</Meter>
        </Meters>
      </MenuBar>

      <Body>
        <SideBar>
          {sideGroups.map((group) => (
            <SideGroup key={group[0].label}>
              {group.map((b) => (
                <SideButton key={b.label} disabled={b.off}>
                  <Stack>
                    <Glyph name={b.icon} />
                    {b.label}
                  </Stack>
                  {b.menu && <SideCaret><Caret /></SideCaret>}
                </SideButton>
              ))}
            </SideGroup>
          ))}
        </SideBar>

        <Workspace>
          <DockRow>
            <Panel $width={430}>
              <Head title="Device control" />
              <DeviceTabs>
                <button>Effects</button>
                <button>Group Handling</button>
              </DeviceTabs>
              <DeviceBody>
                <DeviceBox />
                <DeviceBox $bar />
              </DeviceBody>
            </Panel>

            <Panel $width={428}>
              <Head title="Master" />
              <MasterTools>
                <ToolPiece>
                  <Dots $vertical $tone="#6a6a6a" />
                  <ResetButton>Reset Filter</ResetButton>
                  <OverflowButton aria-label="More filter tools"><Overflow /></OverflowButton>
                </ToolPiece>
                <ToolPiece>
                  <Dots $vertical $tone="#4a4a4a" />
                  <CheckLabel>
                    <CheckBox type="checkbox" defaultChecked />
                    SpecialMaster
                  </CheckLabel>
                  <OverflowButton aria-label="More master tools"><Overflow /></OverflowButton>
                </ToolPiece>
              </MasterTools>
              <MasterBody>
                <GroupBox $width={260}>
                  <Legend>SpecialMaster</Legend>
                  <Fader>
                    <FaderText>
                      <FaderName><small>0</small>Grand Master</FaderName>
                      <FaderName $dim>Grand Master</FaderName>
                      <Attribute>Intensity</Attribute>
                      <Level>100%</Level>
                    </FaderText>
                    <FaderControls>
                      <FaderColumn>
                        <label htmlFor="master-level">Master</label>
                        <FaderDrawing />
                        <Range id="master-level" type="range" defaultValue={100} />
                      </FaderColumn>
                      <FlashList>
                        {['Flash', 'Stomp', 'Full', 'Black'].map((f) => (
                          <FlashButton key={f}>
                            {f}
                            <Lamp />
                          </FlashButton>
                        ))}
                      </FlashList>
                    </FaderControls>
                  </Fader>
                </GroupBox>
                <GroupBox $width={122}>
                  <Legend>GroupMaster</Legend>
                </GroupBox>
                <SlimScroll />
              </MasterBody>
            </Panel>
          </DockRow>

          <DockRow>
            <Panel>
              <Head title="Project Explorer" />
              <ToolBar>
                <ToolStrip>
                  <Tool label="Edit" icon="pages" menu />
                  <Tool label="View" icon="view" menu />
                  <Tool label="Refresh" icon="refresh" />
                </ToolStrip>
                <ToolStrip $kind="grow">
                  <Tool label="Create Directory" icon="createDir" />
                  <Divider />
                  <Tool label="Up" icon="up" off />
                  <Spring />
                  <Tool label="Import Files" icon="files" />
                  <Divider />
                </ToolStrip>
                <ToolStrip $kind="end">
                  <OverflowButton aria-label="More explorer tools"><Overflow /></OverflowButton>
                </ToolStrip>
              </ToolBar>
              <ExplorerBody>
                <TreeBox>
                  <Tree>
                    {tree.map(([label, icon], i) => (
                      <TreeItem key={label}>
                        <Twist>
                          {(label === 'Master' || label === 'Stage View') && (
                            <svg width="7" height="11" viewBox="0 0 7 11"><path d="M1 1v9l5-4.500z" fill="none" stroke="#ddd" /></svg>
                          )}
                        </Twist>
                        <Glyph name={icon} />
                        <TreeLabel $selected={i === 0}>{label}</TreeLabel>
                      </TreeItem>
                    ))}
                  </Tree>
                  <ScrollBar share={71} />
                </TreeBox>
                <Details>
                  <Note>The "Cuelists"</Note>
                  <ListBox>
                    <ListTable>
                      <thead>
                        <tr>
                          <th scope="col">Name</th>
                          <th scope="col" aria-label="Details" />
                        </tr>
                      </thead>
                    </ListTable>
                  </ListBox>
                </Details>
              </ExplorerBody>
            </Panel>

            <EffectsDock>
              <Panel>
                <Head title="Effects and Filters" active />
                <ToolBar>
                  <ToolStrip $kind="wide">
                    <GripTool>
                      <Dots $vertical $tone="#5a5a5a" />
                      <Tool label="Edit" icon="editOff" off />
                    </GripTool>
                    <Tool label="Rename" icon="renameOff" off />
                    <Tool label="Delete" icon="deleteOff" off />
                    <Tool label="Apply" icon="applyOff" off menu />
                  </ToolStrip>
                </ToolBar>
                <TabRow>
                  <Tab $active>Effect</Tab>
                  <Tab>Matrix Effect</Tab>
                  <Tab>Radix Effect</Tab>
                  <Tab>Saved</Tab>
                </TabRow>
                <EffectsBody>
                  <EffectsBox>
                    <EffectsList>
                      <EffectsHeading>Effect 2D</EffectsHeading>
                      <EffectsGrid>
                        {effects2d.map((name) => (
                          <EffectButton key={name}>
                            <Thumb name={name} />
                            {name}
                          </EffectButton>
                        ))}
                      </EffectsGrid>
                      <EffectsHeading>Effect 1D</EffectsHeading>
                      <EffectsGrid>
                        {effects1d.map((name) => (
                          <EffectButton key={name} aria-label={name}>
                            <Thumb name={name} />
                          </EffectButton>
                        ))}
                      </EffectsGrid>
                    </EffectsList>
                    <ScrollBar share={32} />
                  </EffectsBox>
                </EffectsBody>
              </Panel>
              <BottomTabs>
                <BottomTab $active>Effects and Filters</BottomTab>
                <BottomTab>Presets</BottomTab>
              </BottomTabs>
            </EffectsDock>
          </DockRow>
        </Workspace>
      </Body>

      <StatusBar>
        <Glyph name="server" />
        <Glyph name="inspect" />
        <Glyph name="database" />
        <span>(3)</span>
      </StatusBar>

      <FloatingWindow aria-label="Executor">
        <FloatingHead>
          <h2>Executor</h2>
          <FloatingClose aria-label="Close Executor"><Cross size={8} /></FloatingClose>
        </FloatingHead>
        <FloatingBody>
          <AddPage>Add Page</AddPage>
        </FloatingBody>
      </FloatingWindow>
    </Shell>
  );
}
